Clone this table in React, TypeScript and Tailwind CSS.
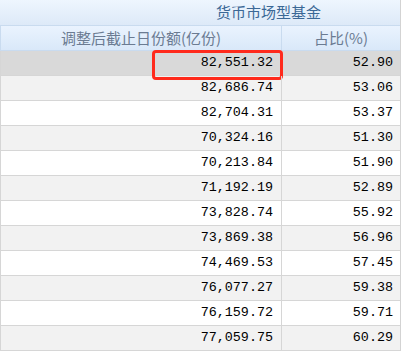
import React from 'react';

const rows: Array<[string, string]> = [
  ['82,551.32', '52.90'],
  ['82,686.74', '53.06'],
  ['82,704.31', '53.37'],
  ['70,324.16', '51.30'],
  ['70,213.84', '51.90'],
  ['71,192.19', '52.89'],
  ['73,828.74', '55.92'],
  ['73,869.38', '56.96'],
  ['74,469.53', '57.45'],
  ['76,077.27', '59.38'],
  ['76,159.72', '59.71'],
  ['77,059.75', '60.29'],
];

const cjk = "font-['Noto_Sans_CJK_SC',sans-serif]";
const mono = "font-['Liberation_Mono',monospace]";

export default function App() {
  return (
    <div className="w-[402px] h-[351px] overflow-hidden bg-white">
      <div className="w-[401px] border-r border-[#d3d3d3]">
        {/* title row */}
        <div
          className={`h-[26px] border-b border-[#c9dbef] bg-gradient-to-b from-[#eef6fe] to-[#dde9f8] pl-[216px] text-[15px] leading-[24px] text-[#3b6896] ${cjk}`}
        >
          货币市场型基金
        </div>

        {/* column headers */}
        <div
          className={`flex h-[25px] border-b border-l border-[#c9dbef] bg-gradient-to-b from-[#eaf3fe] to-[#d9e8f9] text-[15px] leading-[24px] text-[#6b7b92] ${cjk}`}
        >
          <div className="w-[281px] border-r border-[#c9dbef] text-center">
            调整后截止日份额(亿份)
          </div>
          <div className="flex-1 text-center">占比(%)</div>
        </div>

        {/* data */}
        {rows.map(([amount, pct], i) => (
          <div
            key={i}
            className={`flex h-[25px] border-b border-l border-[#d6d6d6] text-[13.4px] leading-[24px] text-black ${mono} ${
              i === 0 ? 'bg-[#d9d9d9]' : i % 2 === 1 ? 'bg-[#f2f2f2]' : 'bg-white'
            }`}
          >
            <div className="relative w-[281px] border-r border-[#d6d6d6] pr-[8px] text-right">
              {amount}
              {i === 0 && (
                <div className="absolute left-[151px] -top-[1px] h-[30px] w-[131px] rounded-[4px] border-[3px] border-[#ff2a1c]" />
              )}
            </div>
            <div className="flex-1 pr-[7px] text-right">{pct}</div>
          </div>
        ))}
      </div>
    </div>
  );
}
